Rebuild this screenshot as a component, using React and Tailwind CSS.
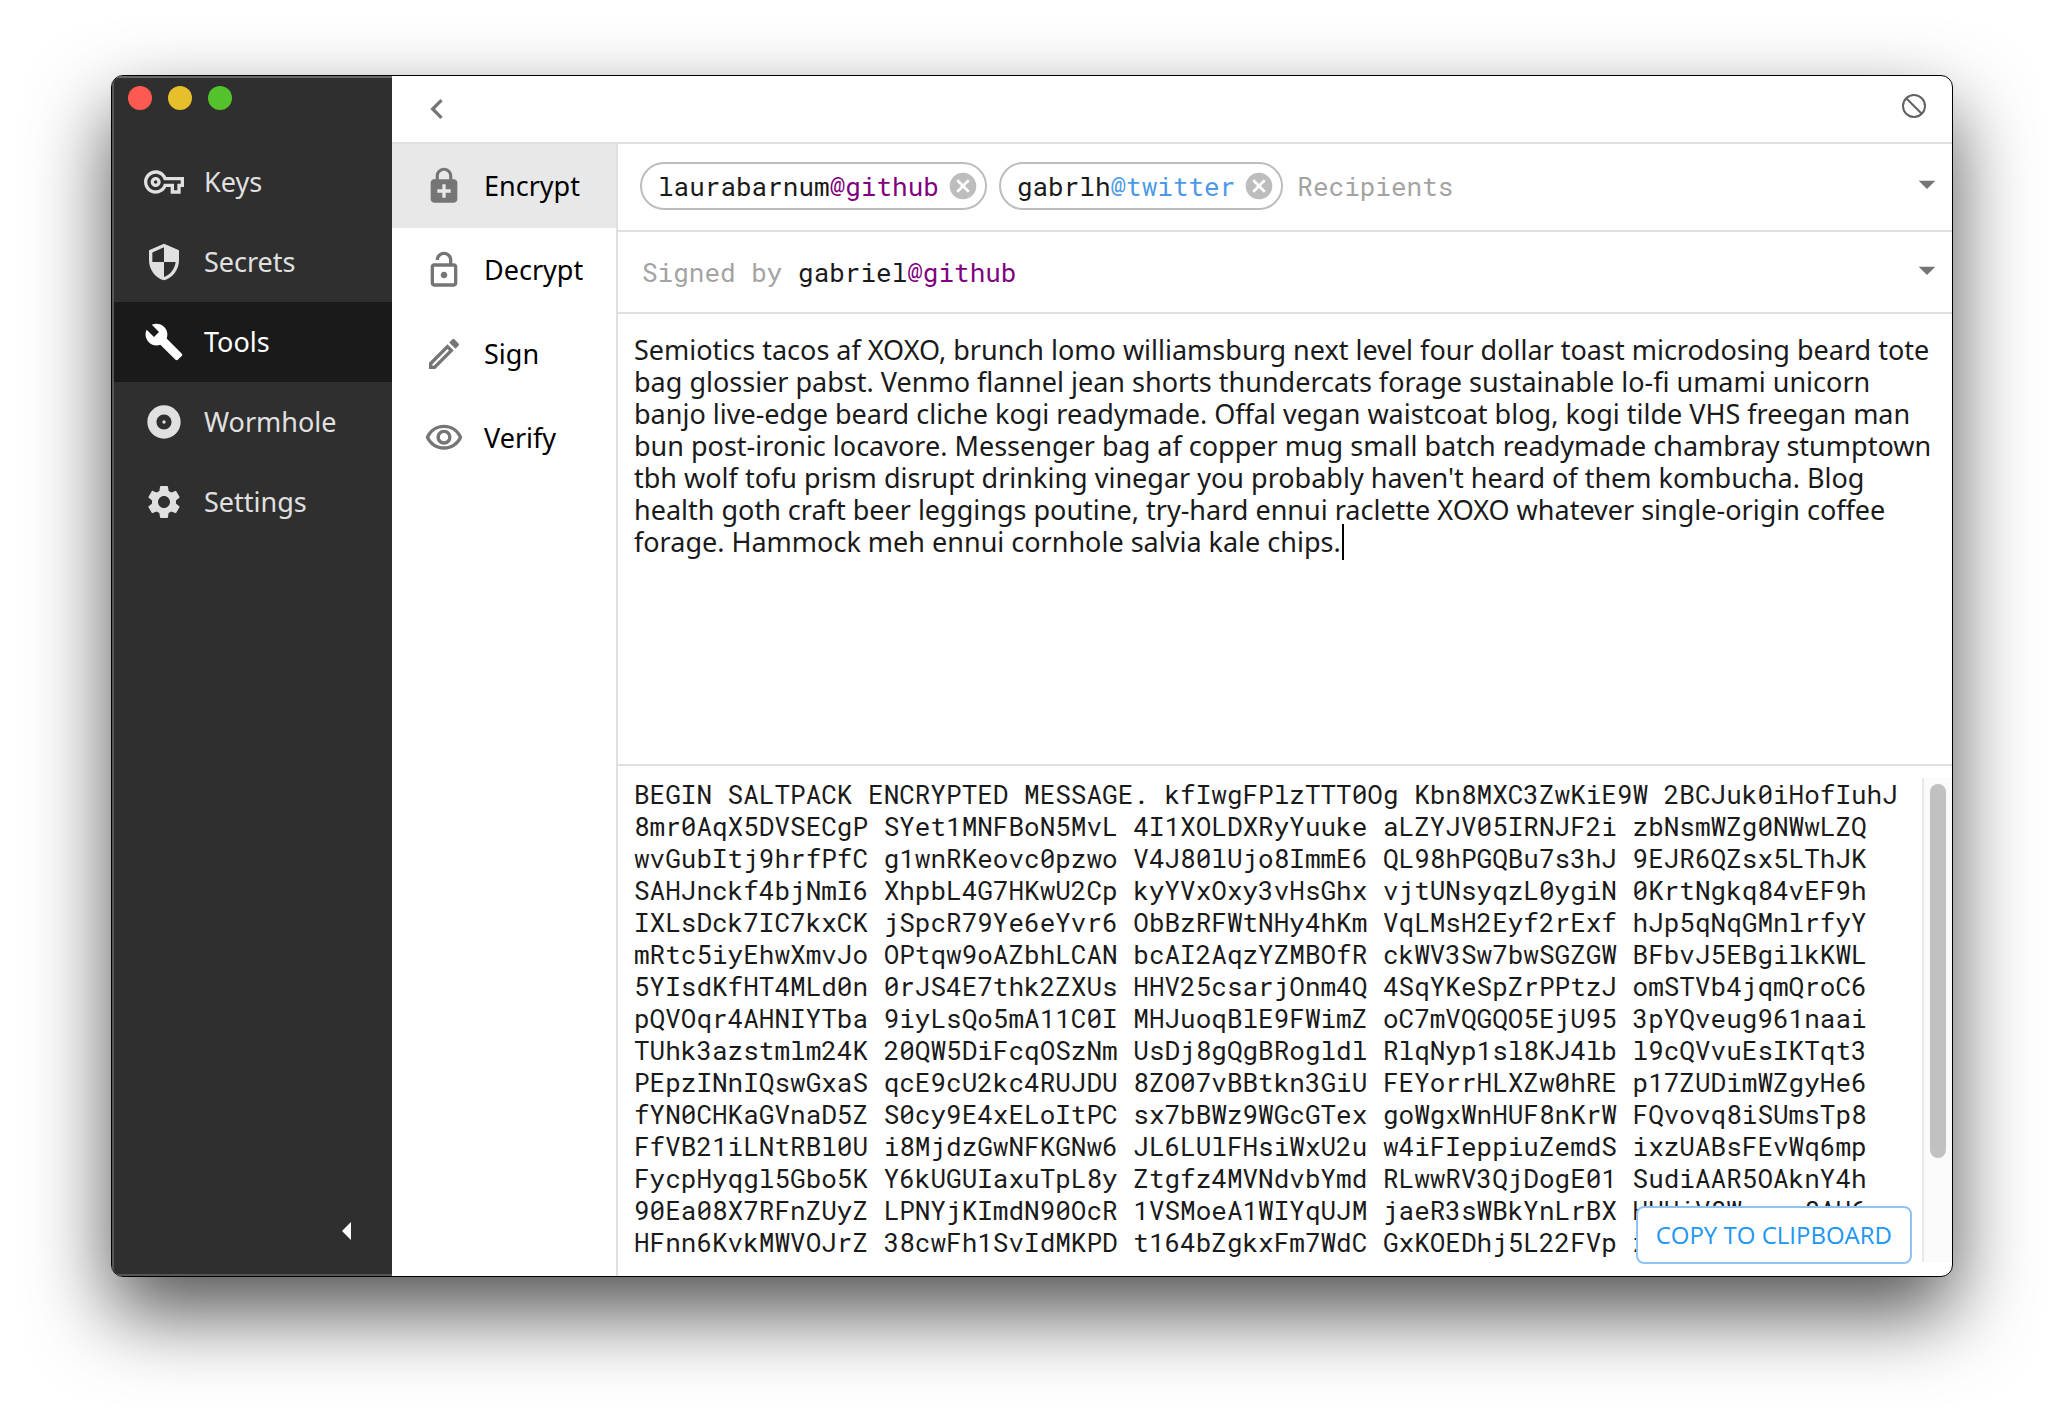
import { useState } from "react";
import {
  MdAlbum,
  MdBuild,
  MdCancel,
  MdChevronLeft,
  MdArrowDropDown,
  MdEnhancedEncryption,
  MdOutlineEdit,
  MdOutlineLockOpen,
  MdOutlineVisibility,
  MdOutlineVpnKey,
  MdSecurity,
  MdSettings,
} from "react-icons/md";

const navItems = [
  { id: "keys", label: "Keys", icon: MdOutlineVpnKey },
  { id: "secrets", label: "Secrets", icon: MdSecurity },
  { id: "tools", label: "Tools", icon: MdBuild },
  { id: "wormhole", label: "Wormhole", icon: MdAlbum },
  { id: "settings", label: "Settings", icon: MdSettings },
];

const toolItems = [
  { id: "encrypt", label: "Encrypt", icon: MdEnhancedEncryption },
  { id: "decrypt", label: "Decrypt", icon: MdOutlineLockOpen },
  { id: "sign", label: "Sign", icon: MdOutlineEdit },
  { id: "verify", label: "Verify", icon: MdOutlineVisibility },
];

const serviceColors = {
  github: "text-[#800080]",
  twitter: "text-[#4a99e9]",
};

const initialMessage =
  "Semiotics tacos af XOXO, brunch lomo williamsburg next level four dollar toast microdosing beard tote bag glossier pabst. Venmo flannel jean shorts thundercats forage sustainable lo-fi umami unicorn banjo live-edge beard cliche kogi readymade. Offal vegan waistcoat blog, kogi tilde VHS freegan man bun post-ironic locavore. Messenger bag af copper mug small batch readymade chambray stumptown tbh wolf tofu prism disrupt drinking vinegar you probably haven't heard of them kombucha. Blog health goth craft beer leggings poutine, try-hard ennui raclette XOXO whatever single-origin coffee forage. Hammock meh ennui cornhole salvia kale chips.";

const encrypted = [
  "BEGIN SALTPACK ENCRYPTED MESSAGE. kfIwgFPlzTTT0Og Kbn8MXC3ZwKiE9W 2BCJuk0iHofIuhJ",
  "8mr0AqX5DVSECgP SYet1MNFBoN5MvL 4I1XOLDXRyYuuke aLZYJV05IRNJF2i zbNsmWZg0NWwLZQ",
  "wvGubItj9hrfPfC g1wnRKeovc0pzwo V4J80lUjo8ImmE6 QL98hPGQBu7s3hJ 9EJR6QZsx5LThJK",
  "SAHJnckf4bjNmI6 XhpbL4G7HKwU2Cp kyYVxOxy3vHsGhx vjtUNsyqzL0ygiN 0KrtNgkq84vEF9h",
  "IXLsDck7IC7kxCK jSpcR79Ye6eYvr6 ObBzRFWtNHy4hKm VqLMsH2Eyf2rExf hJp5qNqGMnlrfyY",
  "mRtc5iyEhwXmvJo OPtqw9oAZbhLCAN bcAI2AqzYZMBOfR ckWV3Sw7bwSGZGW BFbvJ5EBgilkKWL",
  "5YIsdKfHT4MLd0n 0rJS4E7thk2ZXUs HHV25csarjOnm4Q 4SqYKeSpZrPPtzJ omSTVb4jqmQroC6",
  "pQVOqr4AHNIYTba 9iyLsQo5mA11C0I MHJuoqBlE9FWimZ oC7mVQGQO5EjU95 3pYQveug961naai",
  "TUhk3azstmlm24K 20QW5DiFcqOSzNm UsDj8gQgBRogldl RlqNyp1sl8KJ4lb l9cQVvuEsIKTqt3",
  "PEpzINnIQswGxaS qcE9cU2kc4RUJDU 8ZO07vBBtkn3GiU FEYorrHLXZw0hRE p17ZUDimWZgyHe6",
  "fYN0CHKaGVnaD5Z S0cy9E4xELoItPC sx7bBWz9WGcGTex goWgxWnHUF8nKrW FQvovq8iSUmsTp8",
  "FfVB21iLNtRBl0U i8MjdzGwNFKGNw6 JL6LUlFHsiWxU2u w4iFIeppiuZemdS ixzUABsFEvWq6mp",
  "FycpHyqgl5Gbo5K Y6kUGUIaxuTpL8y Ztgfz4MVNdvbYmd RLwwRV3QjDogE01 SudiAAR5OAknY4h",
  "90Ea08X7RFnZUyZ LPNYjKImdN90OcR 1VSMoeA1WIYqUJM jaeR3sWBkYnLrBX HUHiV8Wmzrx8AU6",
  "HFnn6KvkMWVOJrZ 38cwFh1SvIdMKPD t164bZgkxFm7WdC GxKOEDhj5L22FVp z",
].join("\n");

function UserName({ name, service }) {
  return (
    <span className="whitespace-nowrap text-[#1a1a1a]">
      {name}
      <span className={serviceColors[service]}>@{service}</span>
    </span>
  );
}

function Sidebar() {
  const [active, setActive] = useState("tools");

  return (
    <aside className="flex w-[280px] shrink-0 flex-col bg-[#2f2f2f] shadow-[inset_2px_0_#555555,inset_0_2px_#6a6a6a,inset_0_-2px_#555555]">
      <div className="flex h-[66px] gap-4 px-4 pt-[10px]">
        <span className="size-6 rounded-full bg-[#ff5a52]" />
        <span className="size-6 rounded-full bg-[#e6c02a]" />
        <span className="size-6 rounded-full bg-[#54c22b]" />
      </div>

      <nav className="flex flex-1 flex-col pl-[2px]">
        {navItems.map(({ id, label, icon: Icon }) => (
          <button
            key={id}
            onClick={() => setActive(id)}
            className={`flex h-20 items-center gap-5 pl-[30px] text-left ${
              active === id ? "bg-[#1a1a1a] text-white" : "text-[#e0e0e0]"
            }`}
          >
            <Icon className="size-10" />
            {label}
          </button>
        ))}
      </nav>

      <button aria-label="Collapse sidebar" className="mr-8 mb-7 self-end p-2">
        <svg viewBox="0 0 10 18" className="h-[18px] w-[10px] fill-white">
          <path d="M9 0v18L0 9z" />
        </svg>
      </button>
    </aside>
  );
}

function ToolList() {
  const [active, setActive] = useState("encrypt");

  return (
    <nav className="flex w-[226px] shrink-0 flex-col border-r-2 border-[#e0e0e0]">
      {toolItems.map(({ id, label, icon: Icon }) => (
        <button
          key={id}
          onClick={() => setActive(id)}
          className={`flex h-[84px] items-center gap-5 pl-8 text-left text-black ${
            active === id ? "bg-[#e8e8e8]" : ""
          }`}
        >
          <Icon className="size-10 text-[#757575]" />
          {label}
        </button>
      ))}
    </nav>
  );
}

function Recipients() {
  const [recipients, setRecipients] = useState([
    { name: "laurabarnum", service: "github" },
    { name: "gabrlh", service: "twitter" },
  ]);

  const remove = (name) => setRecipients(recipients.filter((r) => r.name !== name));

  return (
    <div className="flex h-[88px] items-center gap-3 border-b-2 border-[#e0e0e0] pr-[5px] pb-[2px] pl-[22px] font-['Roboto_Mono','Liberation_Mono',monospace] text-[26px]">
      {recipients.map((r) => (
        <span
          key={r.name}
          className="flex h-12 items-center gap-2 rounded-full border-2 border-[#bdbdbd] pr-[6px] pl-4"
        >
          <UserName name={r.name} service={r.service} />
          <button aria-label={`Remove ${r.name}`} onClick={() => remove(r.name)}>
            <MdCancel className="size-8 text-[#bdbdbd]" />
          </button>
        </span>
      ))}
      <input
        aria-label="Recipients"
        placeholder="Recipients"
        className="min-w-0 flex-1 pl-[2px] outline-none placeholder:text-[#a3a3a3]"
      />
      <button aria-label="Show recipients" className="mb-1">
        <MdArrowDropDown className="size-10 text-[#757575]" />
      </button>
    </div>
  );
}

function Signer() {
  return (
    <div className="flex h-[82px] items-center justify-between border-b-2 border-[#e0e0e0] pr-[5px] pl-6 font-['Roboto_Mono','Liberation_Mono',monospace] text-[26px]">
      <div className="whitespace-pre">
        <span className="text-[#a3a3a3]">Signed by </span>
        <UserName name="gabriel" service="github" />
      </div>
      <button aria-label="Choose signer" className="mb-1">
        <MdArrowDropDown className="size-10 text-[#757575]" />
      </button>
    </div>
  );
}

function Message() {
  const [message, setMessage] = useState(initialMessage);

  return (
    <div className="relative flex h-[452px] shrink-0 border-b-2 border-[#e0e0e0]">
      <textarea
        aria-label="Message"
        value={message}
        onChange={(e) => setMessage(e.target.value)}
        className="flex-1 resize-none overflow-hidden pt-5 pr-2 pl-4 text-[#1a1a1a] outline-none"
      />
      {/* text cursor */}
      <span className="absolute top-[210px] left-[724px] h-9 w-[2px] bg-black" />
    </div>
  );
}

function Output() {
  return (
    <div className="relative flex min-h-0 flex-1 pt-3 pb-[14px]">
      <textarea
        aria-label="Encrypted message"
        readOnly
        value={encrypted}
        className="flex-1 resize-none overflow-hidden pl-4 font-['Roboto_Mono','Liberation_Mono',monospace] text-[26px] text-[#1a1a1a] outline-none"
      />
      <div className="w-[30px] border-l-2 border-[#e8e8e8] bg-[#fafafa] px-[6px] py-[6px]">
        <div className="h-[374px] rounded-full bg-[#c1c1c1]" />
      </div>
      <button className="absolute right-10 bottom-3 h-[58px] rounded-lg border-2 border-[#90c3f5] bg-white px-[18px] font-['Open_Sans',sans-serif] text-[24px] text-[#2196f3] uppercase">
        Copy to Clipboard
      </button>
    </div>
  );
}

export default function App() {
  return (
    <div className="flex h-screen bg-white px-[111px] pt-[75px] pb-[147px] font-['Noto_Sans',sans-serif] text-[27px] leading-8">
      <div className="flex flex-1 overflow-hidden rounded-[12px] border border-black bg-white shadow-[0_36px_80px_rgba(0,0,0,0.68)]">
        <Sidebar />
        <div className="flex min-w-0 flex-1 flex-col">
          <header className="flex h-[68px] shrink-0 items-center justify-between border-b-2 border-[#e0e0e0] pr-6 pl-[25px]">
            <button aria-label="Back">
              <MdChevronLeft className="size-10 text-[#757575]" />
            </button>
            <button aria-label="Clear" className="mb-[6px]">
              <svg viewBox="0 0 28 28" className="size-7 fill-none stroke-[#616161] stroke-2">
                <circle cx="14" cy="14" r="11" />
                <path d="M6 6l16 16" />
              </svg>
            </button>
          </header>
          <div className="flex min-h-0 flex-1">
            <ToolList />
            <main className="flex min-w-0 flex-1 flex-col">
              <Recipients />
              <Signer />
              <Message />
              <Output />
            </main>
          </div>
        </div>
      </div>
    </div>
  );
}
